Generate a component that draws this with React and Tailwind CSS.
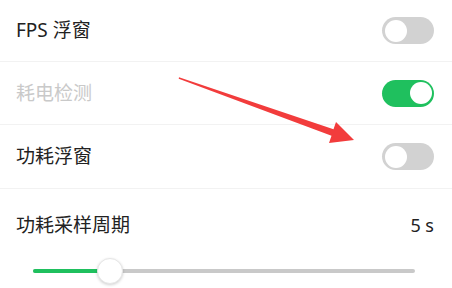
import React from 'react';

const font = { fontFamily: '"Noto Sans", "Noto Sans CJK SC", sans-serif' };

function Toggle({ on }) {
  return (
    <div
      className={`w-[52px] h-[27px] rounded-full p-[2.5px] flex ${on ? 'bg-[#1fc05e] justify-end' : 'bg-[#d2d2d2] justify-start'}`}
    >
      <div className="w-[22px] h-[22px] rounded-full bg-white" />
    </div>
  );
}

function Row({ label, on, disabled, className }) {
  return (
    <div className={`pl-4 border-b border-[#f2f2f2] ${className}`}>
      <div className="h-full flex items-center justify-between pr-[18px]">
        <span className={`text-[19px] ${disabled ? 'text-[#c9c9c9]' : 'text-[#222]'}`}>{label}</span>
        <Toggle on={on} />
      </div>
    </div>
  );
}

export default function App() {
  return (
    <div className="relative w-[452px] h-[288px] bg-white overflow-hidden" style={font}>
      <Row label="FPS 浮窗" on={false} className="h-[62px]" />
      <Row label="耗电检测" on disabled className="h-[63px]" />
      <Row label="功耗浮窗" on={false} className="h-[64px]" />

      <div className="pl-4 pr-[18px]">
        <div className="flex items-center justify-between pt-[22px]">
          <span className="text-[19px] text-[#222]">功耗采样周期</span>
          <span className="text-[18px] text-[#222]">5 s</span>
        </div>
        <div className="relative mt-[18px] ml-[17px] mr-[19px] h-[26px] flex items-center">
          <div className="w-full h-[4px] rounded-full bg-[#c9c9c9]" />
          <div className="absolute left-0 w-[70px] h-[4px] rounded-l-full bg-[#1fc05e]" />
          <div className="absolute left-[64px] w-[26px] h-[26px] rounded-full bg-white border border-[#e6e6e6] shadow-[0_1px_3px_rgba(0,0,0,0.18)]" />
        </div>
      </div>

      <svg className="absolute left-0 top-0 pointer-events-none" width="452" height="288">
        <polygon
          points="179,77.3 333.5,129.2 336,122 354,140 329,143 331.5,135.8 178.7,78.7"
          fill="#f23c3c"
        />
      </svg>
    </div>
  );
}
